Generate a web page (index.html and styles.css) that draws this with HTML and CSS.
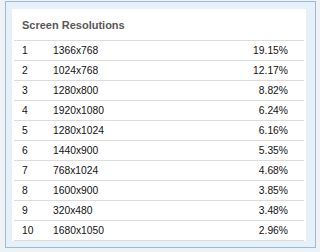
FILE: index.html
```html
<!DOCTYPE html>
<html>
<head>
<meta charset="utf-8">
<link rel="stylesheet" href="styles.css">
</head>
<body>
<div class="frame">
  <div class="panel">
    <div class="title">Screen Resolutions</div>
    <div class="table">
      <div class="row"><span class="rank">1</span><span class="res">1366x768</span><span class="pct">19.15%</span></div>
      <div class="row"><span class="rank">2</span><span class="res">1024x768</span><span class="pct">12.17%</span></div>
      <div class="row"><span class="rank">3</span><span class="res">1280x800</span><span class="pct">8.82%</span></div>
      <div class="row"><span class="rank">4</span><span class="res">1920x1080</span><span class="pct">6.24%</span></div>
      <div class="row"><span class="rank">5</span><span class="res">1280x1024</span><span class="pct">6.16%</span></div>
      <div class="row"><span class="rank">6</span><span class="res">1440x900</span><span class="pct">5.35%</span></div>
      <div class="row"><span class="rank">7</span><span class="res">768x1024</span><span class="pct">4.68%</span></div>
      <div class="row"><span class="rank">8</span><span class="res">1600x900</span><span class="pct">3.85%</span></div>
      <div class="row"><span class="rank">9</span><span class="res">320x480</span><span class="pct">3.48%</span></div>
      <div class="row"><span class="rank">10</span><span class="res">1680x1050</span><span class="pct">2.96%</span></div>
    </div>
  </div>
</div>
</body>
</html>
```

FILE: styles.css
```css
html, body {
  margin: 0;
  padding: 0;
}
body {
  background: #eef2f5;
  font-family: "Liberation Sans", Arial, sans-serif;
  width: 320px;
  height: 252px;
  overflow: hidden;
}
.frame {
  margin: 1px 4px 4px 5px;
  border: 1px solid #9fbad2;
  background: #e6f0f8;
  padding: 7px 9px 6px 6px;
}
.panel {
  background: #ffffff;
  padding: 0 2px;
}
.title {
  padding: 9px 0 8px 8px;
  font-size: 11px;
  line-height: 14px;
  font-weight: bold;
  color: #585858;
}
.table {
  border-bottom: 1px solid #dcdcdc;
}
.row {
  display: grid;
  grid-template-columns: 32px 72px 1fr;
  column-gap: 1px;
  height: 19px;
  border-top: 1px solid #dcdcdc;
  font-size: 10.3px;
  line-height: 19px;
  color: #111111;
}
.rank {
  padding-left: 8px;
}
.res {
  padding-left: 6px;
}
.pct {
  text-align: right;
  padding-right: 16px;
}
```
